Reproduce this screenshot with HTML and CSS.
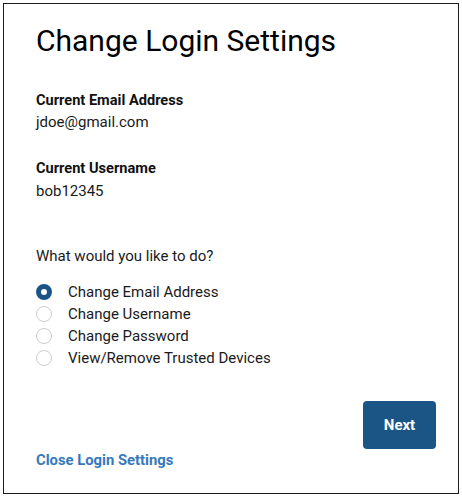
FILE: index.html
```html
<!DOCTYPE html>
<html>
<head>
<meta charset="utf-8">
<link rel="stylesheet" href="styles.css">
</head>
<body>
<div class="frame">
  <h1 class="title">Change Login Settings</h1>
  <div class="field">
    <div class="label">Current Email Address</div>
    <div class="value">jdoe@gmail.com</div>
  </div>
  <div class="field field-2">
    <div class="label">Current Username</div>
    <div class="value">bob12345</div>
  </div>
  <div class="question">What would you like to do?</div>
  <div class="options">
    <label class="option"><span class="radio checked"></span>Change Email Address</label>
    <label class="option"><span class="radio"></span>Change Username</label>
    <label class="option"><span class="radio"></span>Change Password</label>
    <label class="option"><span class="radio"></span>View/Remove Trusted Devices</label>
  </div>
  <div class="actions">
    <button class="next">Next</button>
  </div>
  <a class="close" href="#">Close Login Settings</a>
</div>
</body>
</html>
```
FILE: styles.css
```css
html, body {
  margin: 0;
  padding: 0;
  background: #fff;
}
body {
  font-family: Roboto, "Liberation Sans", sans-serif;
  color: #1a1a1a;
}
.frame {
  margin: 3px;
  width: 456px;
  height: 491px;
  box-sizing: border-box;
  border: 1px solid #1c1c1c;
  padding: 19px 22px 0 32px;
  display: flex;
  flex-direction: column;
}
.title {
  margin: 0;
  font-size: 30px;
  font-weight: 400;
  line-height: 36px;
  color: #000;
}
.field {
  margin-top: 31px;
}
.field-2 {
  margin-top: 26px;
}
.label {
  font-size: 14.6px;
  font-weight: 700;
  line-height: 20px;
  color: #111;
}
.value {
  font-size: 15px;
  line-height: 20px;
  margin-top: 2px;
}
.field-2 .value {
  margin-top: 3px;
}
.question {
  margin-top: 45px;
  font-size: 15px;
  line-height: 20px;
}
.options {
  margin-top: 15px;
  display: flex;
  flex-direction: column;
}
.option {
  display: flex;
  align-items: center;
  height: 22px;
  font-size: 15px;
}
.radio {
  width: 16px;
  height: 16px;
  box-sizing: border-box;
  border-radius: 50%;
  border: 1px solid #c9ccd1;
  background: #fff;
  margin-right: 16px;
}
.radio.checked {
  border: 5px solid #1b5586;
  background: #fff;
}
.actions {
  display: flex;
  justify-content: flex-end;
  margin-top: 32px;
}
.next {
  width: 73px;
  height: 48px;
  background: #1b5586;
  color: #fff;
  border: none;
  border-radius: 4px;
  font-family: Roboto, "Liberation Sans", sans-serif;
  font-size: 15px;
  font-weight: 700;
}
.close {
  margin-top: 1px;
  font-size: 14.8px;
  font-weight: 700;
  color: #3579bb;
  text-decoration: none;
  line-height: 20px;
  align-self: flex-start;
}
```
